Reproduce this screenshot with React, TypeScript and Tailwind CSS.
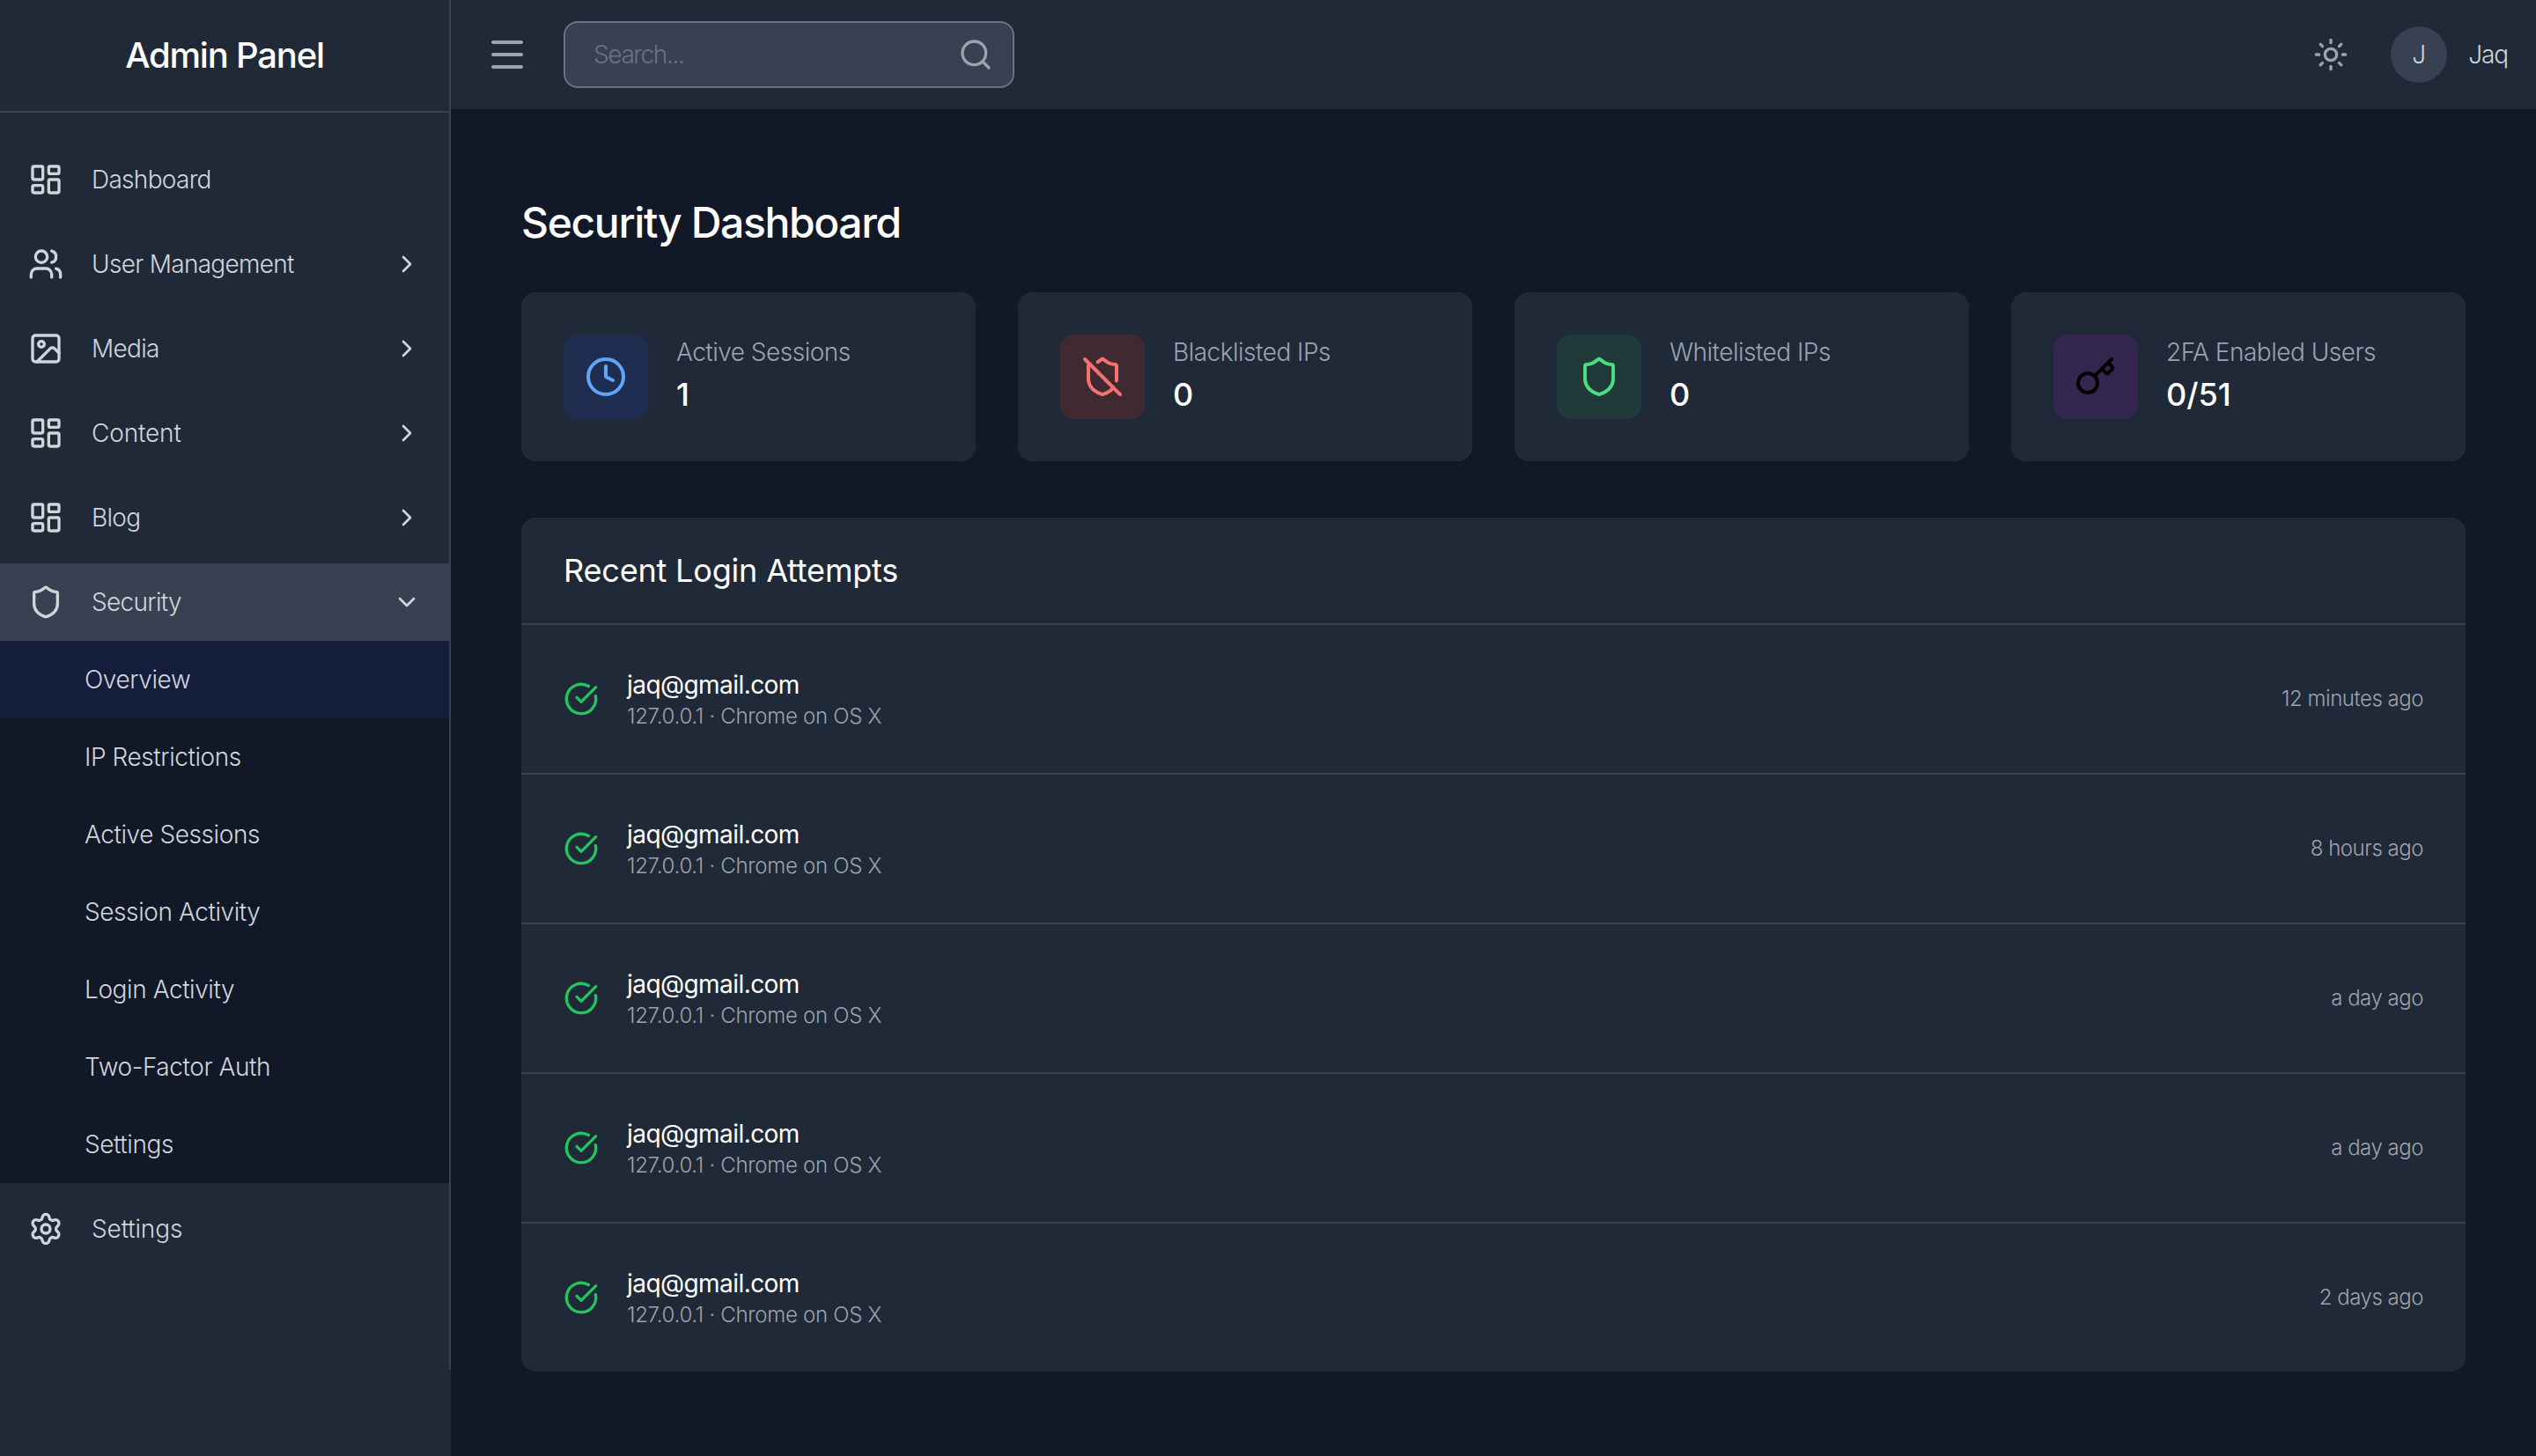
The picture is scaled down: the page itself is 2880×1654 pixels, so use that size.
import { Menu, Search, Sun, LayoutDashboard, Users, Image as ImageIcon, ChevronRight, ChevronDown, Shield, ShieldOff, Settings, Clock, Key, CircleCheckBig } from "lucide-react";

const font = { fontFamily: "Inter, sans-serif" };

function Item({ icon: Icon, label, arrow, active, mb = true, loose }: { icon: any; label: string; arrow?: "r" | "d"; active?: boolean; mb?: boolean; loose?: boolean }) {
  return (
    <div className={`flex h-[88px] items-center pl-8 pr-8 ${mb ? "mb-[8px]" : ""} ${active ? "bg-[#374151]" : ""}`}>
      <Icon className="h-[40px] w-[40px] shrink-0 text-[#d1d5db]" strokeWidth={2} />
      <span className={`ml-[32px] flex-1 text-[28px] leading-[40px] font-light text-[#d1d5db] ${loose ? "tracking-[-0.005em]" : "tracking-[-0.025em]"}`}>{label}</span>
      {arrow === "r" && <ChevronRight className="h-[32px] w-[32px] text-[#d1d5db]" strokeWidth={2} />}
      {arrow === "d" && <ChevronDown className="h-[32px] w-[32px] text-[#d1d5db]" strokeWidth={2} />}
    </div>
  );
}

function Sub({ label, active }: { label: string; active?: boolean }) {
  return (
    <div className={`flex h-[88px] items-center pl-[96px] text-[28px] leading-[40px] font-light tracking-[-0.015em] text-[#d1d5db] ${active ? "bg-[#141e3c]" : ""}`}>{label}</div>
  );
}

function Stat({ icon: Icon, bg, fg, label, value }: { icon: any; bg: string; fg: string; label: string; value: string }) {
  return (
    <div className="flex items-center gap-[32px] rounded-[16px] bg-[#1f2937] p-[48px]">
      <div className={`flex h-[96px] w-[96px] items-center justify-center rounded-[16px] ${bg}`}>
        <Icon className={`h-[48px] w-[48px] ${fg}`} strokeWidth={2} />
      </div>
      <div>
        <div className="text-[28px] leading-[40px] font-light tracking-[-0.018em] text-[#9ca3af]">{label}</div>
        <div className="text-[36px] leading-[56px] font-medium text-white">{value}</div>
      </div>
    </div>
  );
}

function Row({ time, last }: { time: string; last?: boolean }) {
  return (
    <div className={`flex items-center justify-between px-[48px] ${last ? "h-[168px]" : "h-[170px] border-b-2 border-[#374151]"}`}>
      <div className="flex items-center gap-[32px]">
        <CircleCheckBig className="h-[40px] w-[40px] text-[#22c55e]" strokeWidth={2} />
        <div>
          <div className="text-[28px] leading-[40px] tracking-[-0.02em] text-white">jaq@gmail.com</div>
          <div className="text-[24px] leading-[32px] font-light tracking-[-0.012em] text-[#9ca3af]">127.0.0.1 · Chrome on OS X</div>
        </div>
      </div>
      <div className="text-[24px] leading-[32px] font-light tracking-[-0.02em] text-[#9ca3af]">{time}</div>
    </div>
  );
}

export default function App() {
  return (
    <div className="flex h-[1654px] w-[2880px] overflow-hidden bg-[#111827]" style={font}>
      <aside className="flex w-[512px] shrink-0 flex-col bg-[#1f2937]">
        <div className="h-[1556px] border-r-2 border-[#374151]">
          <div className="flex h-[128px] items-center justify-center border-b-2 border-[#374151] text-[40px] font-medium tracking-[-0.03em] text-white">Admin Panel</div>
          <nav className="pt-[32px]">
            <Item icon={LayoutDashboard} label="Dashboard" />
            <Item icon={Users} label="User Management" arrow="r" />
            <Item icon={ImageIcon} label="Media" arrow="r" />
            <Item icon={LayoutDashboard} label="Content" arrow="r" loose />
            <Item icon={LayoutDashboard} label="Blog" arrow="r" />
            <Item icon={Shield} label="Security" arrow="d" active mb={false} />
            <div className="mb-[8px] bg-[#111827]">
              <Sub label="Overview" active />
              <Sub label="IP Restrictions" />
              <Sub label="Active Sessions" />
              <Sub label="Session Activity" />
              <Sub label="Login Activity" />
              <Sub label="Two-Factor Auth" />
              <Sub label="Settings" />
            </div>
            <Item icon={Settings} label="Settings" loose />
          </nav>
        </div>
      </aside>
      <div className="flex min-w-0 flex-1 flex-col">
        <header className="flex h-[124px] items-center bg-[#1f2937] pl-[40px] pr-[32px]">
          <Menu className="h-[48px] w-[48px] text-[#9ca3af]" strokeWidth={2} />
          <div className="ml-[40px] flex h-[76px] w-[512px] items-center justify-between rounded-[16px] border-2 border-[#6b7280] bg-[#374151] pl-[32px] pr-[22px] text-[28px] font-light tracking-[-0.05em]">
            <span className="text-[#6b7280]">Search...</span>
            <Search className="h-[40px] w-[40px] text-[#9ca3af]" strokeWidth={2} />
          </div>
          <div className="flex-1" />
          <Sun className="h-[40px] w-[40px] text-[#9ca3af]" strokeWidth={2} />
          <div className="ml-[48px] flex h-[64px] w-[64px] items-center justify-center rounded-full bg-[#374151] text-[28px] font-light text-[#d1d5db]">J</div>
          <span className="ml-[24px] text-[28px] font-light tracking-[-0.04em] text-[#d1d5db]">Jaq</span>
        </header>
        <main className="px-[80px] pt-[97px]">
          <h1 className="text-[48px] leading-[64px] font-medium tracking-[-0.028em] text-white">Security Dashboard</h1>
          <div className="mt-[47px] grid grid-cols-4 gap-[48px]">
            <Stat icon={Clock} bg="bg-[#1e2d50]" fg="text-[#60a5fa]" label="Active Sessions" value="1" />
            <Stat icon={ShieldOff} bg="bg-[#402a32]" fg="text-[#f87171]" label="Blacklisted IPs" value="0" />
            <Stat icon={Shield} bg="bg-[#1f3a38]" fg="text-[#4ade80]" label="Whitelisted IPs" value="0" />
            <Stat icon={Key} bg="bg-[#34274f]" fg="text-black" label="2FA Enabled Users" value="0/51" />
          </div>
          <div className="mt-[64px] rounded-[16px] bg-[#1f2937]">
            <div className="flex h-[122px] items-center border-b-2 border-[#374151] px-[48px] text-[36px] font-normal tracking-[-0.005em] text-white">Recent Login Attempts</div>
            <Row time="12 minutes ago" />
            <Row time="8 hours ago" />
            <Row time="a day ago" />
            <Row time="a day ago" />
            <Row time="2 days ago" last />
          </div>
        </main>
      </div>
    </div>
  );
}
